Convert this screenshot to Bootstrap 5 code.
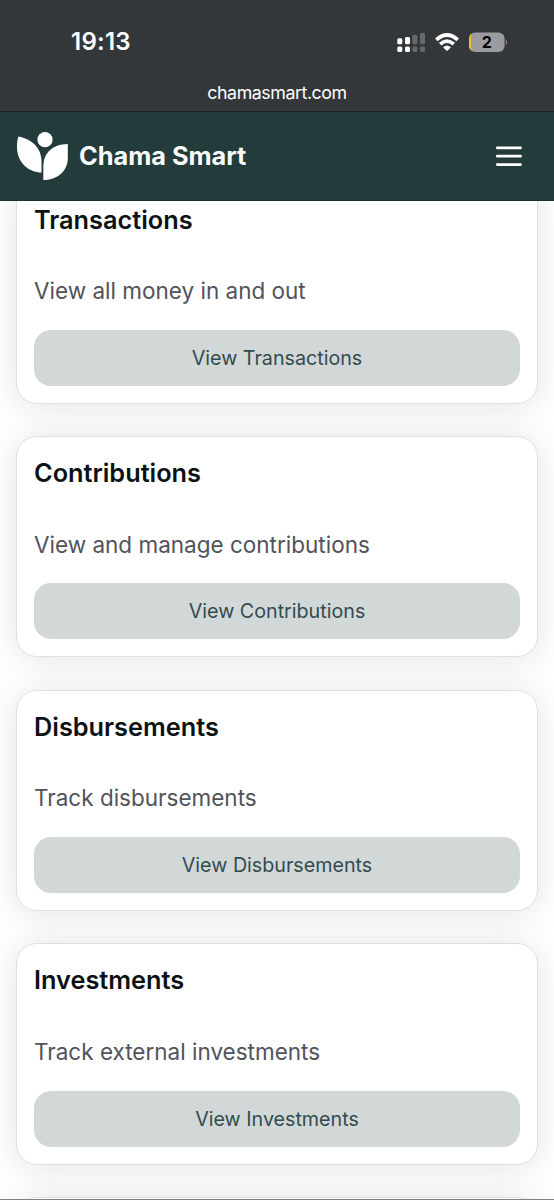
<!DOCTYPE html>
<html lang="en">
<head>
<meta charset="utf-8">
<meta name="viewport" content="width=device-width, initial-scale=1">
<title>Chama Smart</title>
<link href="https://cdn.jsdelivr.net/npm/bootstrap@5.3.0/dist/css/bootstrap.min.css" rel="stylesheet">
<style>
body { font-family: Inter, "Liberation Sans", sans-serif; background: #fff; }
.screen { height: 1200px; border-bottom: 1px solid #808080; }
.device-bar { height: 111px; background: #34373a; color: #fff; flex: none; }
.device-row { height: 83px; padding: 0 47px 0 71px; }
.clock { font-size: 24px; font-weight: 600; letter-spacing: .25px; padding-top: 1px; }
.address { font-size: 17.8px; line-height: 19px; letter-spacing: -.43px; }
.app-bar { height: 90px; background: #233c3b; border-top: 1px solid #1b2526; border-bottom: 1px solid #1d302f; padding: 0 31px 0 16px; flex: none; z-index: 2; }
.brand-name { font-size: 25.3px; font-weight: 700; color: #f8fafc; margin-left: 11px; }
.feed { margin-top: -18.3px; padding: 0 16px; gap: 32.4px; }
.tile { height: 221.2px; flex: none; padding: 0 17px 17px; border: 1px solid #dfe0e1; border-radius: 21px; box-shadow: 0 2px 34px rgba(0,0,0,.115); }
.tile h2 { font-size: 25.3px; font-weight: 600; line-height: 36px; margin: 17.8px 0 0; color: #0c1214; }
.tile p { font-size: 22.5px; line-height: 34px; margin: 36.6px 0 0; color: #52525b; }
.tile .btn { height: 56px; padding: 0; margin-top: auto; border: 0; border-radius: 17px; background: #d2d8d8; color: #334b4f; font-size: 19.7px; line-height: 56px; }
</style>
</head>
<body>
<div class="screen d-flex flex-column overflow-hidden">
  <header class="device-bar">
    <div class="device-row d-flex align-items-center justify-content-between">
      <span class="clock">19:13</span>
      <svg width="112" height="24" viewBox="395 29 112 24" aria-hidden="true">
        <g fill="#fff"><rect x="397.3" y="37.3" width="5" height="6" rx="1.5"/><rect x="405" y="36" width="5" height="7.3" rx="1.5"/><rect x="397.3" y="45.6" width="5" height="5.5" rx="1.5"/><rect x="405" y="45.6" width="5" height="5.5" rx="1.5"/></g>
        <g fill="#66696b"><rect x="412.4" y="33.8" width="5" height="9.5" rx="1.5"/><rect x="420" y="31.7" width="5" height="11.6" rx="1.5"/><rect x="412.4" y="45.6" width="5" height="5.5" rx="1.5"/><rect x="420" y="45.6" width="5" height="5.5" rx="1.5"/></g>
        <g fill="none" stroke="#fff" stroke-width="3.7"><path d="M436.3 38.9Q447 29.2 457.7 38.9"/><path d="M440.2 43.2Q447 37.1 453.8 43.2"/></g>
        <path d="M443.6 46.4Q447 43.6 450.4 46.4L447 49.5Z" fill="#fff" stroke="#fff" stroke-width="1" stroke-linejoin="round"/>
        <clipPath id="cell"><rect x="469" y="31.5" width="35.6" height="19.6" rx="6.2"/></clipPath>
        <g clip-path="url(#cell)"><path fill="#9b9ca0" d="M469 31h36v21h-36z"/><path fill="#e7c331" d="M469 31h2v21h-2z"/></g>
        <path d="M505.8 38.2Q508 41.2 505.8 44.4Z" fill="#9b9ca0"/>
        <text x="486.7" y="47" text-anchor="middle" font-size="16" font-weight="700" fill="#000">2</text>
      </svg>
    </div>
    <div class="address text-center">chamasmart.com</div>
  </header>
  <nav class="app-bar d-flex align-items-center position-relative">
    <svg width="52" height="50" viewBox="16 131 52 50" fill="#fff" aria-hidden="true">
      <circle cx="45" cy="139.7" r="7.6"/>
      <path d="M18.5 136.5C31 139 41.5 147 41.5 162V172.5C29 172.5 17 163 17 147C17 142 17.5 139 18.5 136.5Z"/>
      <path d="M67.8 144V158C67.8 170 58.5 180 43.3 180V167C43.3 153 52 144.5 67.8 144Z"/>
    </svg>
    <span class="brand-name">Chama Smart</span>
    <svg class="ms-auto" width="28" height="26" viewBox="495 143 28 26" stroke="#fff" stroke-width="2.7" stroke-linecap="round" aria-label="Menu"><path d="M497.2 147.8h23.4M497.2 156.2h23.4M497.2 164.6h23.4"/></svg>
  </nav>
  <main class="feed d-flex flex-column">
    <section class="card tile"><h2>Transactions</h2><p>View all money in and out</p><a class="btn w-100">View Transactions</a></section>
    <section class="card tile"><h2>Contributions</h2><p>View and manage contributions</p><a class="btn w-100">View Contributions</a></section>
    <section class="card tile"><h2>Disbursements</h2><p>Track disbursements</p><a class="btn w-100">View Disbursements</a></section>
    <section class="card tile"><h2>Investments</h2><p>Track external investments</p><a class="btn w-100">View Investments</a></section>
    <section class="card tile" aria-hidden="true"></section>
  </main>
</div>
<script src="https://cdn.jsdelivr.net/npm/bootstrap@5.3.0/dist/js/bootstrap.bundle.min.js"></script>
</body>
</html>
